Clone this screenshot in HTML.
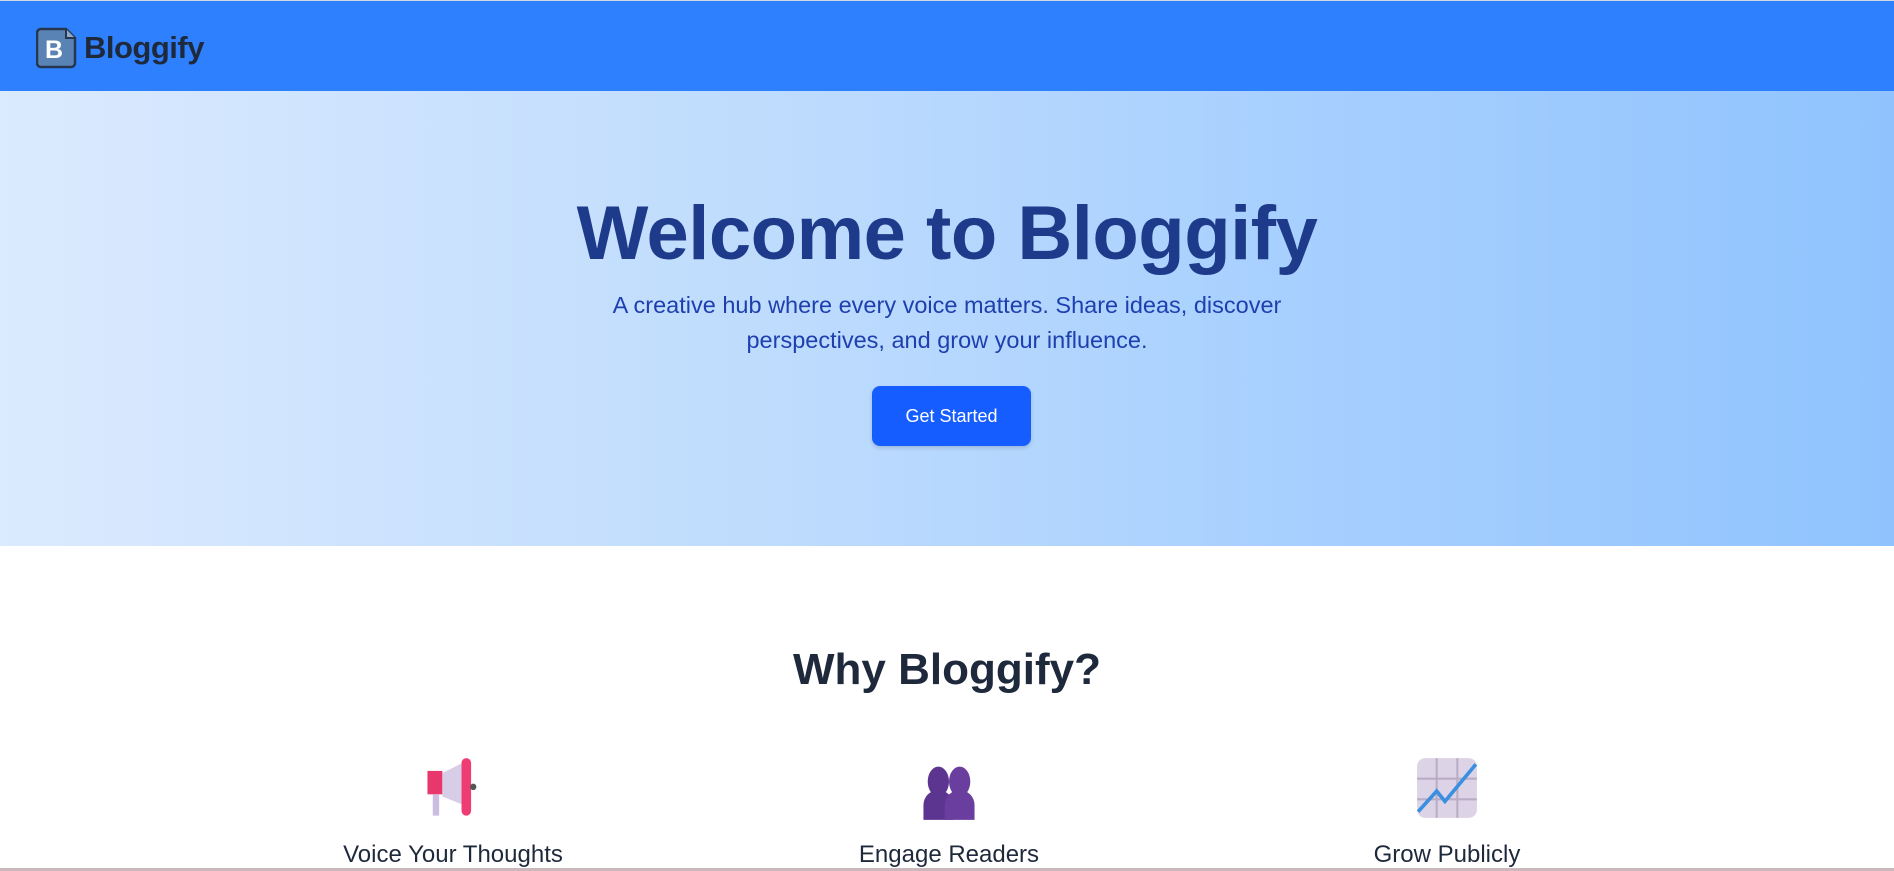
<!DOCTYPE html>
<html><head><meta charset="utf-8"><style>
*{margin:0;padding:0;box-sizing:border-box}
body{width:1894px;height:871px;overflow:hidden;background:#fff;font-family:"Liberation Sans",sans-serif}
.nav{height:91px;background:#2f80ff;position:relative;border-top:1px solid #d0d8e0}
.logo{position:absolute;left:36px;top:26px;display:flex;align-items:center}
.logo span{font-size:31px;font-weight:bold;color:#1e2a3c;margin-left:6px;letter-spacing:-0.5px}
.hero{height:455px;background:linear-gradient(90deg,#dbeafe 0%,#bfdcfd 40%,#a6cfff 70%,#90c3fd 100%);position:relative;text-align:center}
h1{position:absolute;left:0;right:0;top:98px;font-size:76px;font-weight:bold;color:#1e3a8a;line-height:90px;letter-spacing:-0.5px}
.sub{position:absolute;left:587px;width:720px;top:197px;font-size:23.5px;line-height:35px;color:#1e40af}
.btn{position:absolute;left:872px;top:295px;width:159px;height:60px;background:#165dff;border-radius:8px;color:#fff;font-size:18px;line-height:60px;box-shadow:0 2px 4px rgba(0,0,0,.15)}
h2{position:absolute;left:0;right:0;top:645px;text-align:center;font-size:44px;font-weight:bold;color:#1e293b}
.f{position:absolute;top:756px;width:300px;text-align:center}
.f p{position:absolute;top:85px;left:0;right:0;font-size:24px;color:#1e293b}
.f svg{display:block;margin:0 auto}
.line{position:absolute;left:0;right:0;top:868px;height:3px;background:#cbb8bc}
</style></head><body>
<div class="nav"><div class="logo">
<svg width="42" height="42" viewBox="0 0 42 42"><path d="M5 2h25l9 9v25a4 4 0 0 1-4 4H5a4 4 0 0 1-4-4V6a4 4 0 0 1 4-4z" fill="#5a83b5" stroke="#24374f" stroke-width="2.5"/><path d="M30 2v9h9" fill="#8ea9cc" stroke="#24374f" stroke-width="2"/><text x="9" y="31" font-family="Liberation Sans" font-weight="bold" font-size="25" fill="#fff">B</text></svg>
<span>Bloggify</span></div></div>
<div class="hero">
<h1>Welcome to Bloggify</h1>
<div class="sub">A creative hub where every voice matters. Share ideas, discover perspectives, and grow your influence.</div>
<div class="btn">Get Started</div>
</div>
<h2>Why Bloggify?</h2>
<div class="f" style="left:303px"><svg width="70" height="66" viewBox="0 0 64 62"><rect x="8" y="14" width="14" height="22" fill="#e8386b"/><path d="M22 16l20-10v40l-20-8z" fill="#d8cde6"/><rect x="40" y="2" width="9" height="54" rx="4.5" fill="#ee3d72"/><rect x="13" y="36" width="6" height="20" fill="#cbbde0"/><circle cx="51" cy="29" r="3" fill="#555"/></svg><p>Voice Your Thoughts</p></div>
<div class="f" style="left:799px"><svg width="70" height="66" viewBox="0 0 64 62"><ellipse cx="22" cy="24" rx="10" ry="14" fill="#5c3590"/><path d="M8 60v-14a14 14 0 0 1 28 0v14z" fill="#5c3590"/><ellipse cx="42" cy="24" rx="10" ry="14" fill="#6a3e9e"/><path d="M28 60v-14a14 14 0 0 1 28 0v14z" fill="#6a3e9e"/></svg><p>Engage Readers</p></div>
<div class="f" style="left:1297px"><svg width="66" height="66" viewBox="0 0 64 64"><rect x="3" y="2" width="58" height="58" rx="8" fill="#dcd3e6"/><path d="M3 22h58M3 42h58M22 2v58M42 2v58" stroke="#b9adc6" stroke-width="2"/><path d="M4 54l18-20 8 10 30-36" stroke="#3a8fe0" stroke-width="3.5" fill="none"/></svg><p>Grow Publicly</p></div>
<div class="line"></div>
</body></html>
